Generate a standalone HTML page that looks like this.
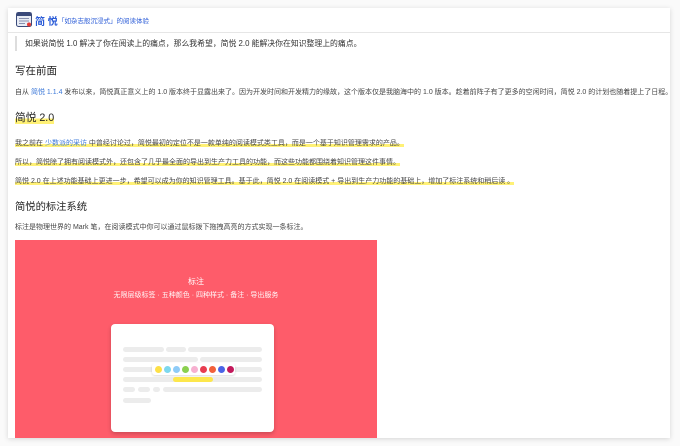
<!DOCTYPE html>
<html><head><meta charset="utf-8"><style>
*{margin:0;padding:0;box-sizing:border-box}
body{width:680px;height:446px;background:#fafafa;font-family:"Liberation Sans","Noto Sans CJK SC",sans-serif;color:#333;position:relative;overflow:hidden}
.card{position:absolute;left:8px;top:8px;width:662px;height:430px;background:#fff;box-shadow:0 1px 5px rgba(0,0,0,.15)}
.a{position:absolute;white-space:nowrap}
.hl{background:linear-gradient(transparent 55%,#fff176 55%)}
.p{font-size:7px;color:#444}
.bar{position:absolute;height:5px;background:#ececec;border-radius:3px}
.dot{position:absolute;width:7px;height:7px;border-radius:50%;top:366px}
</style></head><body>
<div class="card"></div>
<svg class="a" style="left:16px;top:12px" width="16" height="15" viewBox="0 0 16 15"><rect x="0.5" y="0.5" width="15" height="14" rx="2" fill="#e8ecf5" stroke="#3a4a7a"/><rect x="0.5" y="0.5" width="15" height="3.5" fill="#3a4a7a"/><rect x="3" y="6" width="10" height="1" fill="#8891b0"/><rect x="3" y="8.5" width="10" height="1" fill="#8891b0"/><rect x="3" y="11" width="6" height="1" fill="#8891b0"/><circle cx="13" cy="12.5" r="2" fill="#e53935"/></svg>
<div class="a" style="left:35px;top:13px;font-size:10px;color:#2a5bd7;font-weight:bold">简 悦</div>
<div class="a" style="left:58px;top:15px;font-size:6.5px;color:#2a5bd7">「如杂志般沉浸式」的阅读体验</div>
<div class="a" style="left:8px;top:32px;width:662px;height:1px;background:#e6e6e6"></div>
<div class="a" style="left:15px;top:36px;width:2px;height:15px;background:#ddd"></div>
<div class="a" style="left:25px;top:38px;font-size:7.85px;color:#333">如果说简悦 1.0 解决了你在阅读上的痛点，那么我希望，简悦 2.0 能解决你在知识整理上的痛点。</div>
<div class="a" style="left:15px;top:63px;font-size:10.5px;color:#222">写在前面</div>
<div class="a p" style="left:15px;top:87px">自从 <span style="color:#3b78d8">简悦 1.1.4</span> 发布以来，简悦真正意义上的 1.0 版本终于显露出来了。因为开发时间和开发精力的缘故，这个版本仅是我脑海中的 1.0 版本。趁着前阵子有了更多的空闲时间，简悦 2.0 的计划也随着提上了日程。</div>
<div class="a" style="left:15px;top:110px;font-size:10.7px;color:#222"><span class="hl">简悦 2.0</span></div>
<div class="a p" style="left:15px;top:138px"><span class="hl">我之前在 <span style="color:#3b78d8">少数派的采访</span> 中曾经讨论过，简悦最初的定位不是一款单纯的阅读模式类工具，而是一个基于知识管理需求的产品。</span></div>
<div class="a p" style="left:15px;top:157px"><span class="hl">所以，简悦除了拥有阅读模式外，还包含了几乎最全面的导出到生产力工具的功能，而这些功能都围绕着知识管理这件事情。</span></div>
<div class="a p" style="left:15px;top:176px"><span class="hl">简悦 2.0 在上述功能基础上更进一步，希望可以成为你的知识管理工具。基于此，简悦 2.0 在阅读模式 + 导出到生产力功能的基础上，增加了标注系统和稍后读 。</span></div>
<div class="a" style="left:15px;top:198px;font-size:10.3px;color:#222">简悦的标注系统</div>
<div class="a p" style="left:15px;top:222px">标注是物理世界的 Mark 笔，在阅读模式中你可以通过鼠标拨下拖拽高亮的方式实现一条标注。</div>
<div class="a" style="left:15px;top:240px;width:362px;height:198px;background:#fe5c6a"></div>
<div class="a" style="left:15px;top:276px;width:362px;text-align:center;color:#fff;font-size:8px">标注</div>
<div class="a" style="left:15px;top:290px;width:362px;text-align:center;color:#fff;font-size:7px;opacity:.95">无限层级标签 · 五种颜色 · 四种样式 · 备注 · 导出服务</div>
<div class="a" style="left:111px;top:324px;width:163px;height:108px;background:#fff;border-radius:4px;box-shadow:0 2px 4px rgba(0,0,0,.2)"></div>
<div class="bar" style="left:123px;top:347px;width:41px"></div><div class="bar" style="left:166px;top:347px;width:20px"></div><div class="bar" style="left:188px;top:347px;width:74px"></div>
<div class="bar" style="left:123px;top:357px;width:75px"></div><div class="bar" style="left:200px;top:357px;width:62px"></div>
<div class="bar" style="left:123px;top:367px;width:139px"></div>
<div class="a" style="left:152px;top:363px;width:83px;height:12px;background:#fff;border-radius:3px;box-shadow:0 1px 2px rgba(0,0,0,.15)"></div>
<div class="dot" style="left:155px;background:#fde047"></div><div class="dot" style="left:164px;background:#7dd8ee"></div><div class="dot" style="left:173px;background:#8ecbf7"></div><div class="dot" style="left:182px;background:#8bd04f"></div><div class="dot" style="left:191px;background:#f7b0d0"></div><div class="dot" style="left:200px;background:#e83d50"></div><div class="dot" style="left:209px;background:#f2603b"></div><div class="dot" style="left:218px;background:#4a63e6"></div><div class="dot" style="left:227px;background:#c2185b"></div>
<div class="bar" style="left:123px;top:377px;width:139px"></div>
<div class="bar" style="left:173px;top:377px;width:40px;background:#fde74c"></div>
<div class="bar" style="left:123px;top:387px;width:12px"></div><div class="bar" style="left:138px;top:387px;width:12px"></div><div class="bar" style="left:153px;top:387px;width:7px"></div><div class="bar" style="left:163px;top:387px;width:99px"></div>
<div class="bar" style="left:123px;top:398px;width:28px"></div>
</body></html>
